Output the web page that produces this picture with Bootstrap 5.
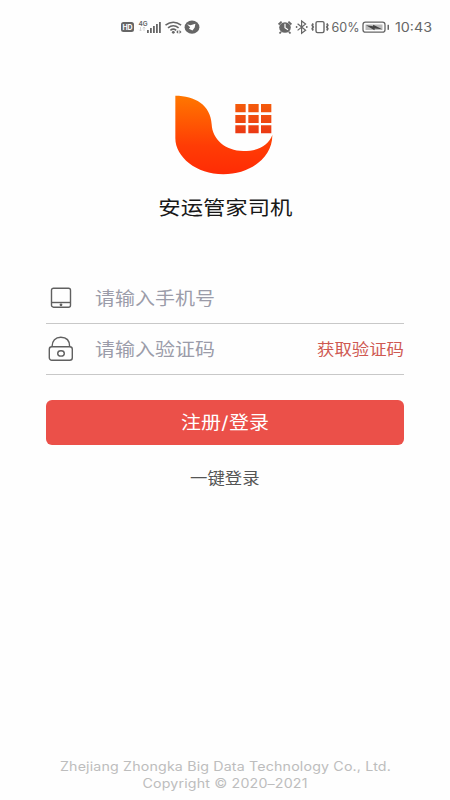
<!DOCTYPE html>
<html lang="zh-CN">
<head>
<meta charset="utf-8">
<meta name="viewport" content="width=device-width, initial-scale=1">
<title>安运管家司机</title>
<link href="https://cdn.jsdelivr.net/npm/bootstrap@5.3.0/dist/css/bootstrap.min.css" rel="stylesheet">
<style>
body{font-family:Inter,"Noto Sans CJK SC",sans-serif;background:#fefefe;height:800px;overflow:hidden}
.status{height:54px;padding:0 17px 0 120px;color:#666}
.status svg{display:block;flex:none}
.wide{display:inline-block;transform:scaleX(1.13);white-space:nowrap}
.brand-logo{margin:31px auto 0;width:130px;height:100px}
.brand-name{font-size:19.8px;line-height:30px;margin-top:8px;color:#181818;font-weight:400}
.login-form{margin:50px 46px 0}
.field{border-bottom:1px solid #c8c8c8;height:51px}
.field-icon{width:30px;flex:none}
.field .form-control{width:150px;height:30px;transform:scaleX(1.13);transform-origin:left;font-size:17.7px;line-height:28px;margin-left:19px}
.field .form-control::placeholder{color:#9b9ca9;opacity:1}
.code-link{font-size:15.4px;line-height:24px;color:#cf5952;transform-origin:right;padding-top:2px}
.login-btn{height:45px;margin-top:25px;border-radius:6px;background:#eb5049;color:#fff;font-size:17.7px;--bs-btn-hover-bg:#dc453e}
.login-btn .wide{padding-top:2px}
.slash{margin:0 .4px}
.quick{font-size:15.4px;line-height:24px;color:#555;margin-top:22px}
.legal{font-size:12.6px;line-height:16.5px;letter-spacing:.14px;color:#bdbdbd;padding-bottom:8px}
</style>
</head>
<body class="d-flex flex-column">
<header class="status d-flex align-items-center justify-content-between">
<svg width="82" height="18" viewBox="0 0 82 18" fill="#666">
<rect x="1" y="4" width="13" height="10" rx="2.5"/><text x="2.6" y="11.7" font-size="7" font-weight="700" fill="#fff" textLength="10">HD</text>
<text x="18.5" y="7.5" font-size="6.5" font-weight="600">4G</text><path d="M20.5 9v4M19.3 11.7l1.2 1.3 1.2-1.3M24 13V9M22.8 10.3 24 9l1.2 1.3" stroke="#ccc" stroke-width=".8" fill="none"/>
<path d="M27 12h1.8v3H27zM30 10h1.8v5H30zM33 8h1.8v7H33zM36 6h1.8v9H36zM39 4h1.8v11H39z"/>
<g fill="none" stroke="#666" stroke-width="1.6"><path d="M45.5 7.2q7.8-6 15.6 0M48 9.9q5.3-4.2 10.6 0M50.4 12.3q2.9-2.3 5.8 0"/></g><circle cx="53.3" cy="14.3" r="1.4"/><path d="m58.2 12-2 1.9 2 1.9zM59.5 12l2 1.9-2 1.9z"/>
<ellipse cx="72" cy="9.2" rx="7.4" ry="6.6"/><path d="m67 6.2 3.4 1.1 5-1.5-.7 3.8-2.2 3-3.6-1.8 1.3-1.5z" fill="#fff"/>
</svg>
<svg width="156" height="18" viewBox="0 0 156 18" fill="#666">
<g transform="translate(0 .3)"><ellipse cx="8" cy="9.2" rx="5.8" ry="5.3"/><path d="m1.6 6.2 3-2.8M14.4 6.2l-3-2.8M4 13.5l-1.5 1.7M12 13.5l1.5 1.7" stroke="#666" stroke-width="1.8"/><path d="M8 5.5v4l3 2" stroke="#fff" stroke-width="1.2" fill="none"/></g>
<path d="m20.6 5.8 8 6.4-4 3V3l4 3-8 6.4" fill="none" stroke="#666" stroke-width="1.2"/><circle cx="19.6" cy="9" r=".9"/><circle cx="29.8" cy="9" r=".9"/>
<rect x="39" y="3.6" width="8" height="11" rx="1.5" fill="none" stroke="#666" stroke-width="1.4"/><path d="m36.2 5.5-1 1.8 1 1.7-1 1.8 1 1.7M49.8 5.5l1 1.8-1 1.7 1 1.8-1 1.7" fill="none" stroke="#666" stroke-width="1.7"/>
<text x="54.5" y="13.9" font-size="12.8" textLength="28" lengthAdjust="spacingAndGlyphs">60%</text>
<rect x="86" y="4.2" width="22" height="10" rx="2.5" fill="none" stroke="#666" stroke-width="1.3"/><path d="M88.5 6.5h17v5.5h-17z" fill="#bbb"/><path d="m89 7.2 7 1 .2-1.4 9 4.5-7.5-.7-.2 1.6z" fill="#444"/><rect x="110.5" y="6.8" width="1.5" height="5"/>
<text x="118" y="13.9" font-size="12.8" textLength="37" lengthAdjust="spacingAndGlyphs">10:43</text>
</svg>
</header>
<main class="text-center">
<svg class="brand-logo d-block" viewBox="0 0 390 300">
<defs><linearGradient id="flame" gradientUnits="userSpaceOnUse" x1="0" y1="30" x2="0" y2="265"><stop stop-color="#ff7800"/><stop offset=".65" stop-color="#ff3c05"/><stop offset="1" stop-color="#ff2c05"/></linearGradient><linearGradient id="tiles" x2="0" y2="1"><stop stop-color="#f45b0b"/><stop offset="1" stop-color="#eb3914"/></linearGradient></defs>
<path fill="url(#flame)" d="M46 32C104 32 152 59 155 118C157 163 196 198 250 198C296 198 325 181 337 150C338 216 272 268 190 268C109 268 46 216 46 160Z"/>
<path fill="url(#tiles)" d="M226 57h31v25h-31zM265 57h31v25h-31zM303 57h31v25h-31zM226 90h31v24h-31zM265 90h31v24h-31zM303 90h31v24h-31zM226 121h31v24h-31zM265 121h31v24h-31zM303 121h31v24h-31z"/>
</svg>
<h1 class="brand-name mb-0"><span class="wide">安运管家司机</span></h1>
<form class="login-form">
<div class="field d-flex align-items-center">
<span class="field-icon"><svg class="d-block mx-auto" width="22" height="22" viewBox="0 0 22 22" fill="none" stroke="#606060" stroke-width="1.4"><rect x="1.5" y="1.2" width="19" height="19" rx="2"/><path d="M1.5 15.5h19"/><circle cx="11" cy="17.8" r=".7" fill="#606060"/></svg></span>
<input class="form-control border-0 bg-transparent shadow-none p-0" type="tel" placeholder="请输入手机号" aria-label="手机号">
</div>
<div class="field d-flex align-items-center">
<span class="field-icon"><svg class="d-block mx-auto" width="26" height="26" viewBox="0 0 26 26" fill="none" stroke="#606060" stroke-width="1.4"><rect x="1.3" y="10.7" width="23" height="13.5" rx="2.5"/><path d="M4 10.7C4 4.5 7.5 1.3 12.8 1.3s8.9 3.2 8.9 9.4"/><ellipse cx="13" cy="17.4" rx="3.3" ry="2.7"/></svg></span>
<input class="form-control border-0 bg-transparent shadow-none p-0" type="text" placeholder="请输入验证码" aria-label="验证码">
<a class="code-link wide text-decoration-none ms-auto" href="#">获取验证码</a>
</div>
<button class="btn login-btn w-100 border-0 p-0" type="button"><span class="wide">注册<span class="slash">/</span>登录</span></button>
<div class="quick"><span class="wide">一键登录</span></div>
</form>
</main>
<footer class="legal text-center mt-auto"><div><span class="wide">Zhejiang Zhongka Big Data Technology Co., Ltd.</span></div><div><span class="wide">Copyright © 2020–2021</span></div></footer>
<script src="https://cdn.jsdelivr.net/npm/bootstrap@5.3.0/dist/js/bootstrap.bundle.min.js"></script>
</body>
</html>
